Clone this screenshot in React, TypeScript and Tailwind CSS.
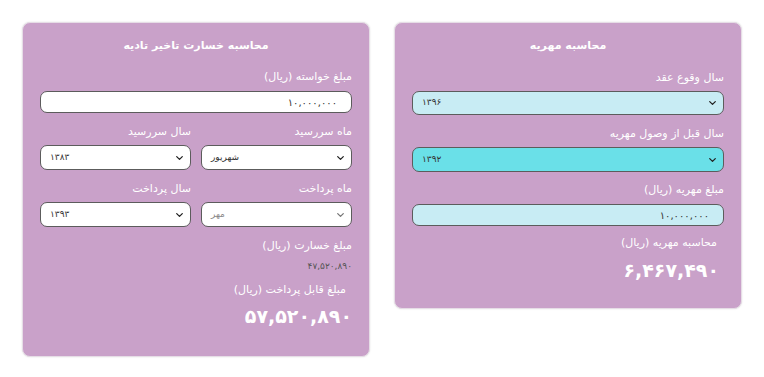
import { ReactNode } from "react";

const FONT = { fontFamily: '"DejaVu Sans", "Noto Sans", sans-serif' };

function Chevron({ light }: { light?: boolean }) {
  return (
    <svg
      viewBox="0 0 10 6"
      className="pointer-events-none absolute right-[7px] top-1/2 h-[5px] w-[7px] -translate-y-1/2"
      fill="none"
      stroke={light ? "#777" : "#222"}
      strokeWidth="1.8"
      strokeLinecap="round"
      strokeLinejoin="round"
    >
      <path d="M1 1l4 4 4-4" />
    </svg>
  );
}

function Select({
  value,
  bg,
  light,
  h = "h-[25px]",
}: {
  value: string;
  bg: string;
  light?: boolean;
  h?: string;
}) {
  return (
    <div className={`relative ${h} rounded-[7px] border border-[#5c5c5c] ${bg}`} dir="ltr">
      <span
        className={`absolute left-[9px] top-1/2 -translate-y-1/2 text-[9px] ${light ? "text-[#888]" : "text-[#333]"}`}
        dir="rtl"
      >
        {value}
      </span>
      <Chevron light={light} />
    </div>
  );
}

function Field({ value, bg }: { value: string; bg: string }) {
  return (
    <div
      className={`flex h-[22px] items-center rounded-[7px] border border-[#5c5c5c] ${bg} pl-[12px] text-[10px] text-[#333]`}
      dir="ltr"
    >
      <span className="ml-auto mr-[14px]">{value}</span>
    </div>
  );
}

function Label({ children, className = "" }: { children: ReactNode; className?: string }) {
  return <div className={`h-[18px] text-[11px] leading-[18px] text-white ${className}`}>{children}</div>;
}

function Card({ children, className = "" }: { children: ReactNode; className?: string }) {
  return (
    <div
      className={`rounded-[8px] border border-[#e6dde6] bg-[#c9a1c9] shadow-[0_0_2px_rgba(0,0,0,0.12)] ${className}`}
    >
      {children}
    </div>
  );
}

export default function App() {
  return (
    <div className="min-h-screen bg-white" style={FONT}>
      <div dir="rtl" className="flex items-start gap-[24px] pr-[22px] pt-[22px]">
        {/* mahriyeh */}
        <Card className="w-[348px] px-[17px] pb-[25px] pt-[14px]">
          <div className="h-[18px] text-center text-[11px] font-bold leading-[18px] text-white">
            محاسبه مهریه
          </div>
          <Label className="mt-[14px]">سال وقوع عقد</Label>
          <div className="mt-[4px]">
            <Select value="۱۳۹۶" bg="bg-[#c8ecf4]" h="h-[24px]" />
          </div>
          <Label className="mt-[10px]">سال قبل از وصول مهریه</Label>
          <div className="mt-[4px]">
            <Select value="۱۳۹۲" bg="bg-[#6ae0e8]" />
          </div>
          <Label className="mt-[9px]">مبلغ مهریه (ریال)</Label>
          <div className="mt-[5px]">
            <Field value="۱۰,۰۰۰,۰۰۰" bg="bg-[#c8ecf4]" />
          </div>
          <Label className="mt-[8px] pr-[7px]">محاسبه مهریه (ریال)</Label>
          <div className="mt-[5px] h-[26px] pr-[5px] text-[19px] font-bold leading-[26px] text-white">
            ۶,۴۶۷,۴۹۰
          </div>
        </Card>

        {/* khesarat */}
        <Card className="w-[348px] px-[17px] pb-[27px] pt-[14px]">
          <div className="h-[18px] text-center text-[11px] font-bold leading-[18px] text-white">
            محاسبه خسارت تاخیر تادیه
          </div>
          <Label className="mt-[13px]">مبلغ خواسته (ریال)</Label>
          <div className="mt-[5px]">
            <Field value="۱۰,۰۰۰,۰۰۰" bg="bg-white" />
          </div>
          <div className="mt-[10px] grid grid-cols-2 gap-[10px]">
            <div>
              <Label>ماه سررسید</Label>
              <div className="mt-[4px]">
                <Select value="شهریور" bg="bg-white" />
              </div>
            </div>
            <div>
              <Label>سال سررسید</Label>
              <div className="mt-[4px]">
                <Select value="۱۳۸۳" bg="bg-white" />
              </div>
            </div>
          </div>
          <div className="mt-[10px] grid grid-cols-2 gap-[10px]">
            <div>
              <Label>ماه پرداخت</Label>
              <div className="mt-[4px]">
                <Select value="مهر" bg="bg-white" light />
              </div>
            </div>
            <div>
              <Label>سال پرداخت</Label>
              <div className="mt-[4px]">
                <Select value="۱۳۹۳" bg="bg-white" />
              </div>
            </div>
          </div>
          <Label className="mt-[10px]">مبلغ خسارت (ریال)</Label>
          <div className="mt-[4px] h-[14px] text-[9px] leading-[14px] text-[#555]">۴۷,۵۲۰,۸۹۰</div>
          <Label className="mt-[8px] pr-[6px]">مبلغ قابل پرداخت (ریال)</Label>
          <div className="mt-[4px] h-[26px] text-[19px] font-bold leading-[26px] text-white">
            ۵۷,۵۲۰,۸۹۰
          </div>
        </Card>
      </div>
    </div>
  );
}
